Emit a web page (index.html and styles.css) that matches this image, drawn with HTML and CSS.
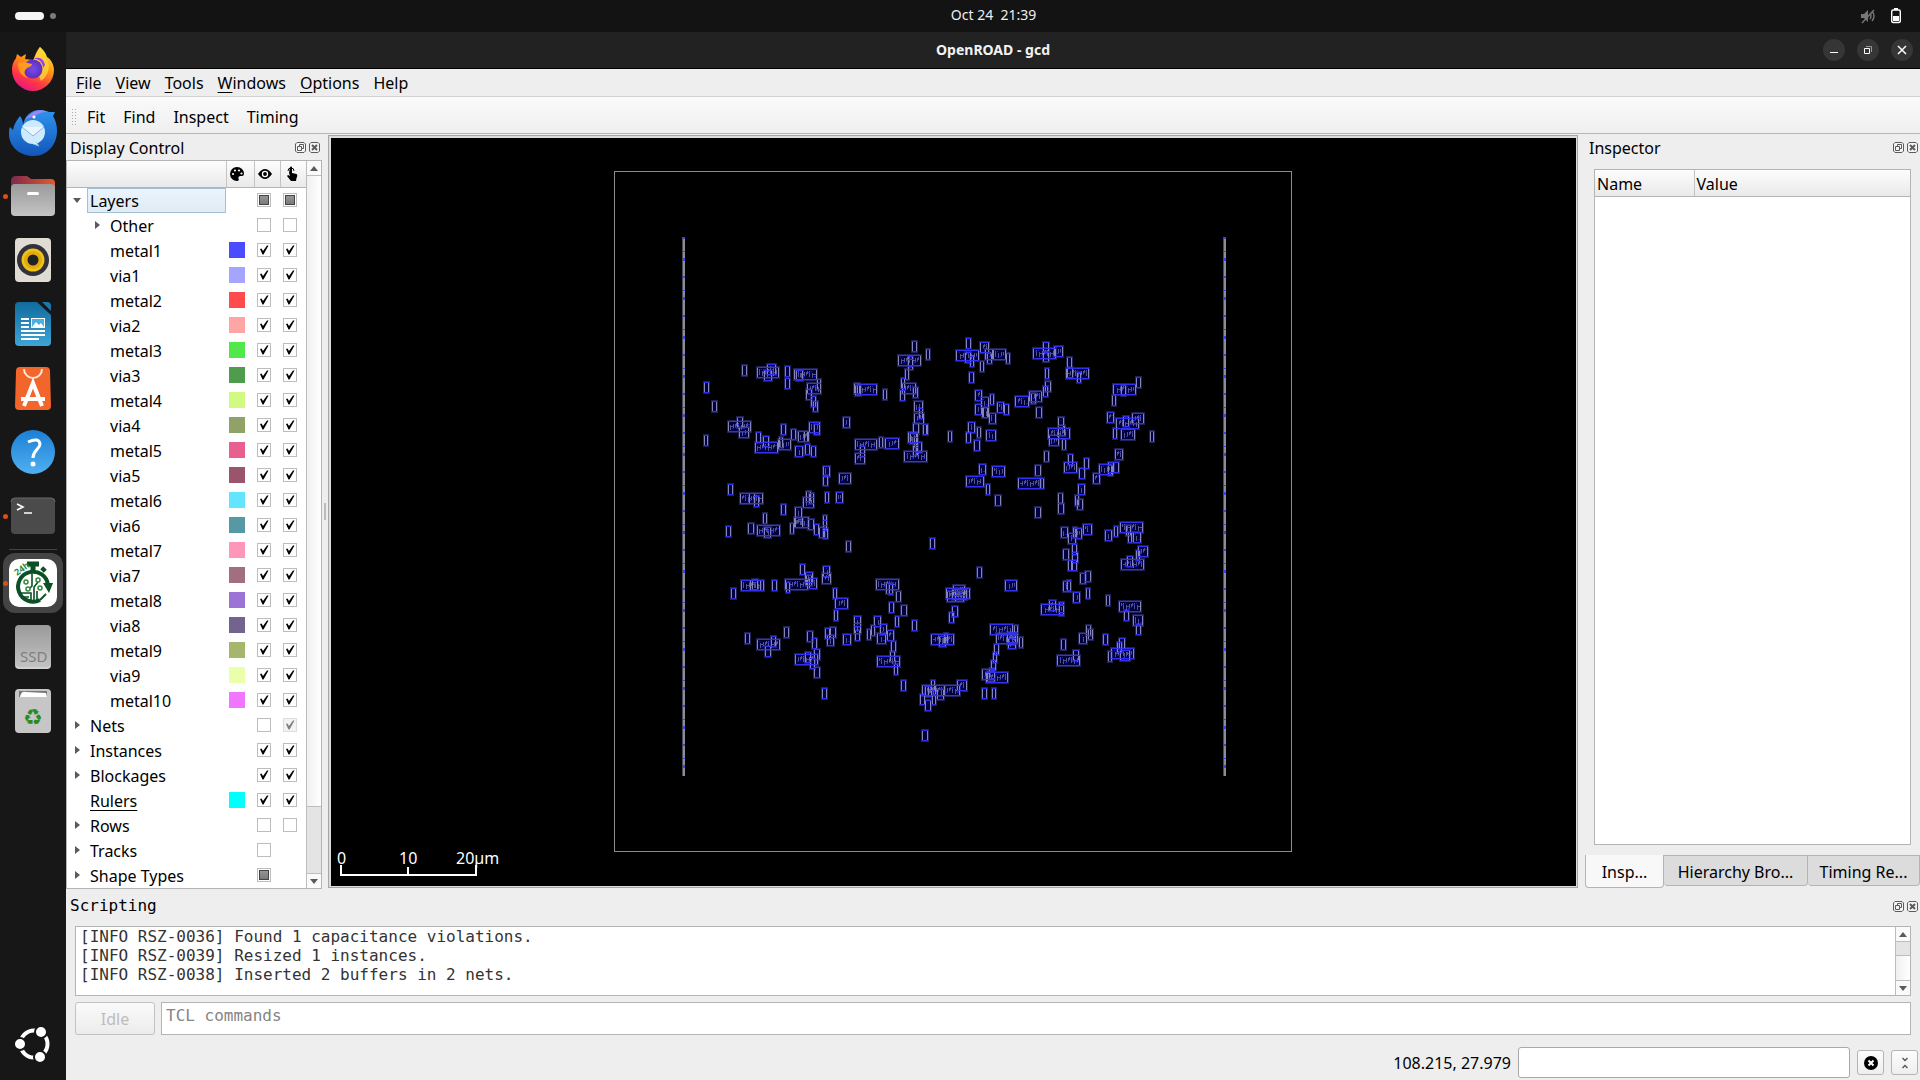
FILE: index.html
```html
<!DOCTYPE html>
<html lang="en">
<head>
<meta charset="utf-8">
<title>OpenROAD - gcd</title>
<link rel="stylesheet" href="styles.css">
</head>
<body>
<svg class="defs" aria-hidden="true">
  <defs>
    <symbol id="float" viewBox="0 0 11 11"><path d="M2 .5h7L10.500 2v7L9 10.500H2L.5 9V2z" fill="#f4f4f4" stroke="#5c5c5c"/><path d="M4.500 4V2.500h4v4H7M2.500 4.500h4v4h-4z" fill="none" stroke="#5c5c5c"/></symbol>
    <symbol id="shut" viewBox="0 0 11 11"><path d="M2 .5h7L10.500 2v7L9 10.500H2L.5 9V2z" fill="#f4f4f4" stroke="#5c5c5c"/><path d="M3 3l5 5M8 3L3 8" stroke="#5c5c5c" stroke-width="2"/></symbol>
    <symbol id="up" viewBox="0 0 8 5"><path d="M0 5l4-5 4 5z" fill="#5a5a5a"/></symbol>
    <symbol id="down" viewBox="0 0 8 5"><path d="M0 0l4 5 4-5z" fill="#5a5a5a"/></symbol>
    <linearGradient id="fox" x1=".8" y1="0" x2=".3" y2="1"><stop offset="0" stop-color="#fff44f"/><stop offset=".4" stop-color="#ff980e"/><stop offset=".75" stop-color="#ff3647"/><stop offset="1" stop-color="#e31587"/></linearGradient>
    <radialGradient id="globe"><stop offset="0" stop-color="#7a4be8"/><stop offset="1" stop-color="#5b2fc0"/></radialGradient>
    <linearGradient id="bird" x1="0" y1="0" x2="0" y2="1"><stop offset="0" stop-color="#2f93ee"/><stop offset="1" stop-color="#1256b8"/></linearGradient>
    <linearGradient id="metal" x1="0" y1="0" x2="0" y2="1"><stop offset="0" stop-color="#9a9a9a"/><stop offset="1" stop-color="#c4c4c4"/></linearGradient>
    <linearGradient id="folder"><stop offset="0" stop-color="#7a2a50"/><stop offset="1" stop-color="#e8592b"/></linearGradient>
    <linearGradient id="doc" x1="0" y1="0" x2="0" y2="1"><stop offset="0" stop-color="#106a9e"/><stop offset="1" stop-color="#3fa5d6"/></linearGradient>
    <linearGradient id="ask" x1="0" y1="0" x2="0" y2="1"><stop offset="0" stop-color="#1d7fd6"/><stop offset="1" stop-color="#4fb0f0"/></linearGradient>
  </defs>
</svg>

<header class="topbar">
  <div class="workspaces"><span class="pill"></span><span class="dot"></span></div>
  <time class="clock">Oct 24&nbsp; 21:39</time>
  <div class="tray">
    <svg width="16" height="16" viewBox="0 0 16 16"><path d="M1 6h3l4-4v12l-4-4H1z" fill="#777"/><path d="M10 5q2 3 0 6M12 3q4 5 0 10M2 15L14 2" fill="none" stroke="#777" stroke-width="1.400"/></svg>
    <svg width="12" height="16" viewBox="0 0 12 16"><path d="M4 0h4v2H4z" fill="#fff"/><rect x="1.700" y="2" width="8.600" height="12.500" rx="1.500" fill="none" stroke="#fff" stroke-width="1.400"/><path d="M3 8h6v5H3z" fill="#fff"/></svg>
  </div>
</header>

<div class="desktop">
  <nav class="dock" aria-label="Dock">
    <button class="app" aria-label="Firefox"><svg viewBox="0 0 48 48"><path d="M31 3c4 3 6 7 7 10 4 2 7 8 7 13a21 21 0 1 1-42 0c0-6 2-9 4-12l1-4 4 3 5-3-1 5 8 1z" fill="url(#fox)"/><path d="M24 18c2-6 3-11 7-15 4 5 4 9 7 13 5 8-1 18-6 21z" fill="#ffd43a" opacity=".8"/><circle cx="24" cy="25" r="9.500" fill="url(#globe)"/><path d="M9 19c5-3 9 0 14 1 0 3-4 3-6 5-3 3-1 7 2 9-6-1-10-7-10-15z" fill="#ff9a1e"/><path d="M24 15c5-1 10 3 10 9l2-3c-1-6-6-9-12-6z" fill="#9a3df0"/></svg></button>
    <button class="app" aria-label="Thunderbird"><svg viewBox="0 0 48 48"><path d="M11 8c3 4 3 7 3 10 1-10 8-16 17-16 4 0 7 1 9 2h6l-2 4c3 5 4 10 4 15 0 14-10 25-23 25C10 48 0 38 0 26c0-3 0-5 1-7l3 3c1-6 4-10 7-14z" fill="url(#bird)"/><path d="M21 7c4-5 12-6 17-3-6 0-10 2-13 5-4 0-7 1-9 3 1-2 3-4 5-5z" fill="#9a86f2"/><circle cx="24" cy="24" r="12" fill="#cfe9ff"/><path d="M13 19l11 9 11-9M24 36l6 2-3-4" fill="#e9f6ff" stroke="#7db8ee"/><circle cx="25" cy="9" r="1.500" fill="#fff"/></svg></button>
    <button class="app running" aria-label="Files"><svg viewBox="0 0 48 48"><path d="M2 9q0-5 5-5h11l4 3h20q4 0 4 4v12H2z" fill="url(#folder)"/><rect x="2" y="12" width="44" height="32" rx="4" fill="url(#metal)"/><rect x="18" y="20" width="12" height="3" rx="1.500" fill="#fff"/></svg></button>
    <button class="app" aria-label="Rhythmbox"><svg viewBox="0 0 48 48"><rect x="6" y="2" width="36" height="44" rx="4" fill="#e0dcd3"/><circle cx="24" cy="24" r="16" fill="#30313b"/><circle cx="24" cy="24" r="11.500" fill="#f2c118"/><circle cx="24" cy="24" r="9" fill="#e0ab0e"/><circle cx="24" cy="24" r="5.500" fill="#222"/></svg></button>
    <button class="app" aria-label="Writer"><svg viewBox="0 0 48 48"><path d="M10 2h18l14 13v27q0 4-4 4H10q-4 0-4-4V6q0-4 4-4z" fill="url(#doc)"/><path d="M33 2h5q4 0 4 4v5z" fill="#1c78aa"/><path d="M12 18h8v2h-8zM12 22h8v2h-8zM12 26h8v2h-8zM12 30h24v2H12zM12 34h24v2H12zM12 38h18v2H12z" fill="#fff"/><rect x="22.500" y="18.500" width="13" height="9" fill="#4ab0e0" stroke="#fff"/><path d="M23 27l4-5 3 3 2-2 3 4z" fill="#fff"/></svg></button>
    <button class="app" aria-label="App Center"><svg viewBox="0 0 48 48"><path d="M11 3h26q4 0 4 4l1 35q0 4-4 4H10q-4 0-4-4L7 7q0-4 4-4z" fill="#f2652b"/><path d="M15 5a9 9 0 0 0 18 0" fill="none" stroke="#fbe6da" stroke-width="2"/><path d="M15 42l9-23 9 23M12 35h24" fill="none" stroke="#fff" stroke-width="4"/></svg></button>
    <button class="app" aria-label="Help"><svg viewBox="0 0 48 48"><circle cx="24" cy="24" r="22" fill="url(#ask)"/><path d="M19 14q11-5 12 2c0 5-7 6-7 14" fill="none" stroke="#fff" stroke-width="3"/><circle cx="24" cy="36" r="2.500" fill="#fff"/></svg></button>
    <button class="app running" aria-label="Terminal"><svg viewBox="0 0 48 48"><rect x="2" y="6" width="44" height="36" rx="4" fill="#4b4b4b"/><path d="M2 10q0-4 4-4h36q4 0 4 4" fill="none" stroke="#6a6a6a"/><path d="M8 12l6 3-6 3M15 21h8" fill="none" stroke="#fff" stroke-width="1.600"/></svg></button>
    <hr class="dock-line">
    <button class="app running active" aria-label="OpenROAD"><svg viewBox="0 0 48 48"><rect width="48" height="48" rx="10" fill="#fff"/><g fill="none" stroke="#0b4f24"><path d="M39 26A15 15 0 1 0 31 41" stroke-width="4"/><path d="M31 41l6-6" stroke-width="2"/><path d="M18 5h12M24 4v9M33 12l3-3" stroke-width="5"/><path d="M23 15v12l-3 3M25 42V28l4-5M28 42V32M12 34h10v8M14 38h6" stroke-width="1.600"/></g><path d="M34 24h10l-4 10z" fill="#0b4f24"/><g fill="#fff" stroke="#2d8a3a" stroke-width="1.500"><circle cx="17" cy="23" r="2"/><circle cx="29" cy="21" r="2"/><circle cx="19" cy="30" r="2"/><circle cx="31" cy="29" r="2"/></g><text x="8" y="17" class="day" transform="rotate(-35 8 17)">24h</text></svg></button>
    <button class="app" aria-label="SSD"><svg viewBox="0 0 48 48"><rect x="6" y="2" width="36" height="44" rx="4" fill="url(#metal)"/><path d="M7 43q1 2 4 2h27q2 0 3-2" fill="none" stroke="#ddd"/><text x="11" y="39" class="ssd">SSD</text></svg></button>
    <button class="app" aria-label="Trash"><svg viewBox="0 0 48 48"><rect x="6" y="2" width="36" height="44" rx="4" fill="#c6c6c6"/><path d="M10 4h28v6H10z" fill="#777"/><path d="M11 10q1-6 6-5l20 1 1 4z" fill="#fff"/><text x="24" y="38" class="recycle">♻</text></svg></button>
    <button class="app start" aria-label="Show Apps"><svg viewBox="0 0 48 48"><circle cx="25" cy="24" r="13.500" fill="none" stroke="#fff" stroke-width="4"/><g fill="#fff" stroke="#171717" stroke-width="2"><circle cx="11" cy="24" r="6"/><circle cx="32" cy="12" r="6"/><circle cx="31" cy="37" r="6"/></g></svg></button>
  </nav>

  <main class="window">
    <div class="titlebar">
      <h1>OpenROAD - gcd</h1>
      <div class="winbtns">
        <button aria-label="Minimize"><svg viewBox="0 0 22 22"><path d="M7 13.500h8" stroke="#fff"/></svg></button>
        <button aria-label="Restore"><svg viewBox="0 0 22 22"><path d="M7.500 9.500h5v5h-5z" fill="none" stroke="#fff"/><path d="M9 7.500h5.500V13" fill="none" stroke="#999"/></svg></button>
        <button aria-label="Close"><svg viewBox="0 0 22 22"><path d="M7 7l8 8M15 7l-8 8" stroke="#fff" stroke-width="1.500"/></svg></button>
      </div>
    </div>
    <div class="menubar">
      <button><u>F</u>ile</button><button><u>V</u>iew</button><button><u>T</u>ools</button><button><u>W</u>indows</button><button><u>O</u>ptions</button><button>Help</button>
    </div>
    <div class="toolbar">
      <span class="grip"></span><button>Fit</button><button>Find</button><button>Inspect</button><button>Timing</button>
    </div>

    <div class="work">
      <section class="control">
        <div class="panel-title"><h2>Display Control</h2><button aria-label="Float"><svg><use href="#float"/></svg></button><button aria-label="Close"><svg><use href="#shut"/></svg></button></div>
        <div class="tree">
          <table>
            <thead><tr>
              <th class="c-name"></th>
              <th class="c-color"><svg width="14" height="14" viewBox="0 0 14 14"><path d="M7 0a7 7 0 1 0 0 14c2 0 2-1 1.500-2.500C8 10 9 9 10.500 9H12q2 0 2-2.500C14 3 11 0 7 0z"/><g fill="#f4f4f4"><circle cx="3" cy="7" r="1.100"/><circle cx="5" cy="3.500" r="1.100"/><circle cx="9" cy="3.500" r="1.100"/><circle cx="11.500" cy="6.500" r="1.100"/></g></svg></th>
              <th class="c-eye"><svg width="14" height="10" viewBox="0 0 14 10"><path d="M0 5q7-10 14 0Q7 15 0 5z"/><circle cx="7" cy="5" r="3.200" fill="#fff"/><circle cx="7" cy="5" r="1.900"/></svg></th>
              <th class="c-hand"><svg width="14" height="15" viewBox="-2 0 14 15"><path d="M3 7l1-6q1.500-1 2 0v6l4.500 1q1.500 1 0 4L10 15H5L1 10l1-1 2 1z"/><path d="M2 5a3 3 0 1 1 6 0" fill="none" stroke="#000"/></svg></th>
            </tr></thead>
            <tbody id="tree-rows"></tbody>
          </table>
          <div class="scroll" aria-hidden="true"><span class="step"><svg><use href="#up"/></svg></span><span class="track"></span><span class="thumb"></span><span class="step"><svg><use href="#down"/></svg></span></div>
        </div>
      </section>
      <div class="split"><span></span></div>

      <section class="layout" aria-label="Layout">
        <svg id="chip" viewBox="331 138 1245 748">
          <rect x="614.500" y="171.500" width="677" height="680" fill="none" stroke="#8c8c8c"/>
          <g id="rails"></g>
          <g id="cells"></g>
          <path d="M341 865v10h135v-10M408 867v8" fill="none" stroke="#fff" stroke-width="2"/>
          <g class="scale"><text x="337" y="864">0</text><text x="399" y="864">10</text><text x="456" y="864">20µm</text></g>
        </svg>
      </section>

      <section class="inspector">
        <div class="panel-title"><h2>Inspector</h2><button aria-label="Float"><svg><use href="#float"/></svg></button><button aria-label="Close"><svg><use href="#shut"/></svg></button></div>
        <div class="props"><table><thead><tr><th class="p-name">Name</th><th>Value</th></tr></thead></table></div>
        <div class="tabs" role="tablist">
          <button role="tab" aria-selected="true" class="tab on">Insp...</button><button role="tab" class="tab mid">Hierarchy Bro...</button><button role="tab" class="tab last">Timing Re...</button>
        </div>
      </section>
    </div>

    <section class="scripting">
      <div class="panel-title"><h2>Scripting</h2><button aria-label="Float"><svg><use href="#float"/></svg></button><button aria-label="Close"><svg><use href="#shut"/></svg></button></div>
      <div class="log">
        <pre>[INFO RSZ-0036] Found 1 capacitance violations.
[INFO RSZ-0039] Resized 1 instances.
[INFO RSZ-0038] Inserted 2 buffers in 2 nets.</pre>
        <div class="scroll" aria-hidden="true"><span class="step"><svg><use href="#up"/></svg></span><span class="thumb"></span><span class="track"></span><span class="step"><svg><use href="#down"/></svg></span></div>
      </div>
      <div class="command">
        <button class="idle" disabled>Idle</button>
        <textarea rows="1" placeholder="TCL commands" aria-label="TCL commands"></textarea>
      </div>
    </section>

    <footer class="status">
      <output>108.215, 27.979</output>
      <input type="text" aria-label="Find">
      <button aria-label="Clear"><svg width="14" height="14" viewBox="0 0 14 14"><circle cx="7" cy="7" r="7"/><path d="M4.500 4.500l5 5M9.500 4.500l-5 5" stroke="#fff" stroke-width="2"/></svg></button>
      <button aria-label="Collapse"><svg width="6" height="12" viewBox="0 0 6 12"><path d="M.5 1L3 3.500 5.500 1M.5 11L3 8.500 5.500 11" fill="none" stroke="#555" stroke-width="1.400"/></svg></button>
    </footer>
  </main>
</div>
<script src="app.js"></script>
</body>
</html>
```

FILE: styles.css
```css
* { box-sizing: border-box; }
body {
  margin: 0;
  min-height: 100vh;
  display: flex;
  flex-direction: column;
  background: #171717;
  color: #000;
  font: 16px/20px "Noto Sans", sans-serif;
}
button, input, textarea { font: inherit; color: inherit; padding: 0; margin: 0; }
button { border: 0; background: none; }
h1, h2, pre { margin: 0; }
.defs { position: absolute; width: 0; height: 0; }

.topbar {
  height: 32px;
  padding: 0 18px 0 15px;
  display: grid;
  grid-template-columns: 1fr auto 1fr;
  align-items: center;
  background: #131313;
  color: #eee;
}
.workspaces { display: flex; align-items: center; gap: 6px; }
.pill { width: 29px; height: 8px; border-radius: 4px; background: #f5f5f5; }
.dot { width: 6px; height: 6px; border-radius: 50%; background: #7c7c7c; }
.clock { font-size: 14px; padding: 0 0 2px 70px; }
.tray { display: flex; justify-content: flex-end; align-items: center; gap: 14px; }

.desktop { flex: 1; display: flex; }
.dock {
  width: 66px;
  flex: none;
  display: flex;
  flex-direction: column;
  align-items: center;
  gap: 16px;
  padding: 12px 0;
}
.app { position: relative; width: 48px; height: 48px; }
.app svg { position: relative; display: block; width: 48px; height: 48px; }
.running::before {
  content: "";
  position: absolute;
  left: -6px;
  top: 22px;
  width: 5px;
  height: 5px;
  border-radius: 50%;
  background: #d9501c;
  z-index: 1;
}
.active::after {
  content: "";
  position: absolute;
  inset: -6px;
  border-radius: 12px;
  background: #444;
}
.active svg { z-index: 1; }
.dock-line { width: 48px; height: 3px; margin: -8px 0; border: 0; background: linear-gradient(#171717 1px, #444 1px, #444 2px, #171717 2px); }
.start { margin-top: auto; }
.day { font: bold 9px "Noto Sans", sans-serif; fill: #2d8a3a; }
.ssd { font: 15px "Noto Sans", sans-serif; fill: #808080; }
.recycle { font: 22px "DejaVu Sans", sans-serif; fill: #2c8a25; text-anchor: middle; }

.window { flex: 1; min-width: 0; display: flex; flex-direction: column; background: #eee; }
.titlebar {
  height: 37px;
  display: grid;
  grid-template-columns: 1fr auto 1fr;
  align-items: center;
  padding: 0 7px;
  background: #222;
  border-bottom: 1px solid #000;
  color: #f2f2f2;
}
.titlebar h1 { grid-column: 2; font-size: 14px; font-weight: 700; }
.winbtns { display: flex; justify-content: flex-end; gap: 12px; }
.winbtns button { width: 22px; height: 22px; border-radius: 50%; background: #363636; }
.winbtns svg { display: block; width: 22px; height: 22px; }

.menubar { height: 28px; display: flex; align-items: center; gap: 14px; padding-left: 10px; border-bottom: 1px solid #d2d2d2; }
.menubar u { text-underline-offset: 3px; }
.toolbar {
  height: 37px;
  display: flex;
  align-items: center;
  gap: 18px;
  padding: 3px 0 0 5px;
  border-bottom: 1px solid #b6b6b6;
  background: linear-gradient(#fafafa, #efefef);
}
.grip { width: 5px; height: 17px; margin-right: -7px; background: radial-gradient(#aaa 1px, transparent 1px) 0 0 / 3px 3px; }

.work { flex: 1; min-height: 0; display: flex; }
.panel-title { display: flex; align-items: center; gap: 3px; height: 26px; padding: 1px 2px 0 4px; }
.panel-title h2 { flex: 1; font-size: 16px; font-weight: 400; }
.panel-title button, .panel-title svg { display: block; width: 11px; height: 11px; }

.control { width: 256px; flex: none; display: flex; flex-direction: column; }
.tree { flex: 1; display: flex; border: 1px solid #b4b4b4; background: #fff; }
.tree table { flex: 1; border-collapse: collapse; table-layout: fixed; align-self: flex-start; }
.tree th { height: 26px; padding: 0; border-right: 1px solid #c4c4c4; border-bottom: 1px solid #b4b4b4; background: linear-gradient(#fdfdfd, #e9e9e9); vertical-align: middle; }
.tree th:last-child { border-right: 0; }
.tree th svg { display: block; margin-left: 3px; }
.c-name { width: 160px; }
.c-color { width: 28px; }
.c-eye, .c-hand { width: 26px; }
.tree td { height: 25px; padding: 0; text-align: center; vertical-align: middle; }
.name { display: flex; align-items: center; height: 25px; text-align: left; }
.name label { flex: 1; height: 25px; padding: 2px 0 0 2px; border: 1px solid transparent; }
.arrow { width: 20px; display: flex; justify-content: center; align-items: center; }
.child { padding-left: 20px; }
.arrow::before { content: ""; }
.shut::before { border: 4px solid transparent; border-left: 5px solid #5a5a5a; border-right: 0; }
.open::before { border: 4px solid transparent; border-top: 5px solid #5a5a5a; border-bottom: 0; }
.selected label { border-color: #a5c0d4; background: linear-gradient(#e9f4fc, #e0ebf4); }
.link label { text-decoration: underline; text-underline-offset: 3px; }
.swatch { display: block; width: 16px; height: 16px; margin-left: 3px; }
.tree input {
  appearance: none;
  display: block;
  width: 14px;
  height: 14px;
  margin-left: 3px;
  border: 1px solid #bdbdbd;
  background: #fff center / 12px 12px no-repeat;
}
.tree input:checked { background-image: url("data:image/svg+xml,%3Csvg xmlns='http://www.w3.org/2000/svg' viewBox='0 0 12 12'%3E%3Cpath d='M2 5l1.500-.5 1.500 2.500L9 1.500h1.500L5.500 10.500H4.500z'/%3E%3C/svg%3E"); }
.tree input:disabled { background-color: #e8e8e8; opacity: .5; }
.tree input.partial { background: linear-gradient(#999, #777) content-box; padding: 1px; box-shadow: inset 0 0 0 1px #fff, inset 0 0 0 2px #444; }

.scroll { width: 15px; flex: none; display: flex; flex-direction: column; border-left: 1px solid #bdbdbd; background: linear-gradient(90deg, #f0f0f0, #fff); }
.step { height: 14px; display: flex; align-items: center; justify-content: center; background: #fafafa; }
.step svg { width: 8px; height: 5px; }
.track { flex: 1; border: solid #bdbdbd; border-width: 1px 0 0; }
.thumb { height: 68px; background: #e4e4e4; border: solid #bdbdbd; border-width: 1px 0; }

.split { width: 6px; flex: none; display: flex; align-items: center; justify-content: center; }
.split span { width: 2px; height: 17px; background: radial-gradient(#bbb 1px, transparent 1px) 0 0 / 2px 3px; }
.layout { flex: 1; min-width: 0; display: flex; margin: 1px 0; padding: 2px 1px 1px 2px; background: #dcdcdc; border: 1px solid #a6a6a6; }
#chip { display: block; width: 100%; height: 100%; min-height: 0; background: #000; shape-rendering: crispEdges; }
.scale { font: 16px "Noto Sans", sans-serif; fill: #fff; }

.inspector { width: 342px; flex: none; display: flex; flex-direction: column; padding-left: 7px; }
.props { flex: 1; margin: 9px 9px 10px; border: 1px solid #b4b4b4; background: #fff; }
.props table { width: 100%; border-collapse: collapse; table-layout: fixed; }
.props th { height: 26px; padding: 2px 0 0 2px; text-align: left; font-weight: 400; border-bottom: 1px solid #b4b4b4; background: linear-gradient(#fdfdfd, #e9e9e9); }
.props .p-name { width: 99px; border-right: 1px solid #c4c4c4; }
.tabs { display: flex; align-items: flex-start; height: 34px; }
.tab { flex: none; height: 31px; padding-top: 2px; border: 1px solid #b4b4b4; border-left: 0; border-radius: 0 0 4px 4px; background: #dcdcdc; white-space: nowrap; }
.tab.on { width: 79px; height: 33px; border-left: 1px solid #b4b4b4; border-top: 0; background: #f8f8f8; }
.tab.mid { width: 144px; }
.tab.last { flex: 1; }

.scripting { padding-top: 1px; }
.scripting .panel-title { height: 32px; padding-top: 0; }
.scripting h2, .log, .command textarea { font-family: "DejaVu Sans Mono", monospace; }
.log { display: flex; height: 70px; margin: 4px 9px 0; border: 1px solid #b4b4b4; background: #fff; }
.log pre { flex: 1; padding-left: 4px; font: inherit; line-height: 19px; color: #333; }
.log .thumb { height: 15px; }
.log .track { border-top: 0; border-bottom: 1px solid #bdbdbd; }
.command { display: flex; gap: 6px; margin: 6px 9px 0; }
.idle { width: 80px; height: 33px; border: 1px solid #c2c2c2; border-radius: 3px; background: linear-gradient(#fafafa, #ececec); color: #bdbdbd; }
.command textarea { flex: 1; height: 33px; padding: 3px 4px; border: 1px solid #b4b4b4; background: #fff; resize: none; overflow: hidden; }
.command textarea::placeholder { color: #858585; }

.status { height: 45px; display: flex; align-items: center; justify-content: flex-end; gap: 7px; padding: 12px 2px 2px 0; }
.status input { width: 332px; height: 31px; border: 1px solid #a9a9a9; border-radius: 3px; background: #fff; }
.status button { width: 27px; height: 25px; display: flex; align-items: center; justify-content: center; border: 1px solid #b4b4b4; border-radius: 3px; background: linear-gradient(#fdfdfd, #eee); }
```

FILE: app.js
```js
// Display control rows: name, depth, arrow, colour, visible, selectable.
// States: 1 on, 0 off, "p" partly on, "d" on but disabled, null no box.
const rows = [
  ["Layers", 0, "open", null, "p", "p"],
  ["Other", 1, "shut", null, 0, 0],
  ["metal1", 1, "", "#4b4bff", 1, 1], ["via1", 1, "", "#a5a5ff", 1, 1],
  ["metal2", 1, "", "#ff4b4b", 1, 1], ["via2", 1, "", "#ffa5a5", 1, 1],
  ["metal3", 1, "", "#50e84b", 1, 1], ["via3", 1, "", "#4f9c4f", 1, 1],
  ["metal4", 1, "", "#d2fa82", 1, 1], ["via4", 1, "", "#90a268", 1, 1],
  ["metal5", 1, "", "#e8608f", 1, 1], ["via5", 1, "", "#9a556c", 1, 1],
  ["metal6", 1, "", "#63e5ff", 1, 1], ["via6", 1, "", "#5698a4", 1, 1],
  ["metal7", 1, "", "#ff96b9", 1, 1], ["via7", 1, "", "#a36f80", 1, 1],
  ["metal8", 1, "", "#9c74d6", 1, 1], ["via8", 1, "", "#74628f", 1, 1],
  ["metal9", 1, "", "#a6b66c", 1, 1], ["via9", 1, "", "#e9ffaa", 1, 1],
  ["metal10", 1, "", "#f075ff", 1, 1],
  ["Nets", 0, "shut", null, 0, "d"],
  ["Instances", 0, "shut", null, 1, 1],
  ["Blockages", 0, "shut", null, 1, 1],
  ["Rulers", 0, "", "#00ffff", 1, 1],
  ["Rows", 0, "shut", null, 0, 0],
  ["Tracks", 0, "shut", null, 0, null],
  ["Shape Types", 0, "shut", null, "p", null],
];
const box = (name, kind, s) => s === null ? "" :
  `<input type="checkbox" id="${kind}-${name.replace(" ", "-")}" aria-label="${name} ${kind}"` +
  `${s === 1 || s === "d" ? " checked" : ""}${s === "d" ? " disabled" : ""}${s === "p" ? ' class="partial"' : ""}>`;
document.getElementById("tree-rows").innerHTML = rows.map(([n, d, a, c, v, s]) =>
  `<tr><td><div class="name${d ? " child" : ""}${n === "Layers" ? " selected" : ""}${n === "Rulers" ? " link" : ""}">` +
  `<span class="arrow ${a}"></span><label for="visible-${n.replace(" ", "-")}">${n}</label></div></td>` +
  `<td>${c ? `<span class="swatch" style="background:${c}"></span>` : ""}</td>` +
  `<td>${box(n, "visible", v)}</td><td>${box(n, "selectable", s)}</td></tr>`).join("");

// Placed cells, by region: origin, then x,y,width in thirds of a unit.
const regions = [
  [680, 320, "186,134,16 73,186,16 97,244,15 73,344,13 232,140,67 262,131,28 252,150,23 315,138,14 315,174,14 342,148,69 348,150,20 381,190,41 411,178,11 379,208,17 394,228,15 400,244,15 144,304,69 172,292,18 176,322,30 303,312,14 334,328,15 354,334,32 373,334,13 386,305,34 403,312,18 229,337,15 250,348,19 226,366,69 298,352,12 295,358,39 346,377,25 375,373,14 393,379,14 523,188,19 526,195,19 530,192,60 609,207,10 655,106,69 684,108,15 697,62,14 738,88,13 684,116,15 676,148,12 664,173,10 667,190,42 700,200,16 660,210,14 703,244,27 717,265,9 703,280,30 700,310,18 730,312,13 685,335,30 690,338,20 701,352,12 707,367,17 700,374,14 673,394,69 490,292,21 526,358,67 524,398,30 539,378,14 597,350,11 614,354,42 430,437,22 430,466,14 478,460,37 145,491,15 179,520,69 223,528,16 206,520,17 378,514,14 370,532,33 386,520,16 436,515,13 469,516,22 303,553,14 346,560,22"],
  [680, 500, "249,40,11 204,68,17 138,78,16 231,76,68 251,80,20 330,70,10 342,50,44 346,52,24 384,58,17 403,72,15 418,80,19 430,46,12 430,60,12 430,85,16 499,124,15 750,114,14 184,240,69 210,240,34 216,238,18 276,240,14 153,265,14 361,193,15 316,236,68 318,246,13 376,217,25 378,224,18 388,234,23 428,197,22 427,220,26 459,265,11 465,294,38 463,330,12 588,238,70 618,250,22 628,253,13 648,273,15 628,306,14 664,316,18 645,349,11 697,361,15 523,348,22 523,370,22 526,390,14 583,348,22 574,376,10 562,388,13 599,372,22 592,398,26 622,390,22 632,424,14 630,452,14 490,403,25 436,384,14 449,381,18 442,404,20 313,381,14 196,399,15 232,418,70 274,409,14 256,438,17 382,393,17 395,413,15 345,463,68 376,455,17 402,448,17 391,474,15 403,500,17 591,468,69 642,492,11 664,540,14 427,565,16"],
  [920, 320, "138,54,14 19,88,13 108,90,69 136,96,17 149,108,12 181,67,28 194,88,24 202,98,16 220,88,40 258,99,11 181,122,10 148,156,16 340,84,69 370,67,18 370,92,18 401,79,27 440,112,15 438,144,69 441,142,17 472,156,13 376,145,13 376,183,18 368,198,15 328,214,40 334,218,16 285,228,43 348,260,17 166,211,22 184,232,24 166,252,22 187,260,20 190,262,14 211,222,13 232,247,22 251,253,15 208,278,22 145,306,22 138,337,14 172,320,10 199,331,31 163,360,19 85,332,10 9,312,14 415,291,18 385,324,67 415,314,22 387,345,30 427,357,13 372,392,14 445,402,16 433,427,40 491,415,14 478,443,19 346,436,18 295,474,70 361,474,13 178,433,21 216,438,38 138,468,54 199,492,10 224,526,18 346,562,18 475,492,22 415,520,16 415,550,18 466,526,9 472,537,19 647,172,14 580,192,68 603,196,14 577,225,13 561,276,22 589,295,68 610,288,17 637,280,37 603,328,41 580,324,13 690,333,11 586,388,25 538,432,40 564,427,17 564,436,14 580,427,18 518,460,21"],
  [920, 500, "424,80,22 445,99,24 466,85,22 488,73,27 460,82,10 457,133,16 430,148,19 455,157,17 443,180,12 457,180,14 554,90,21 583,78,12 600,67,68 618,76,15 625,96,12 640,96,25 655,138,30 647,151,12 603,177,69 621,167,19 171,201,14 256,240,37 78,264,72 100,256,37 105,273,26 82,272,50 96,268,44 481,219,17 496,213,19 430,243,25 441,240,12 460,276,20 499,263,13 559,286,13 364,312,70 388,300,22 418,306,15 418,314,15 96,319,18 88,337,15 598,304,67 613,330,16 640,346,29 649,373,15 478,399,25 498,375,14 505,388,16 550,403,15 422,417,14 33,402,68 56,408,21 73,400,11 211,373,69 282,376,13 229,400,66 262,396,32 262,402,28 265,414,25 297,411,11 223,432,15 220,457,13 214,481,14 187,508,40 199,516,67 208,505,19 202,512,24 185,564,15 216,564,11 411,465,69 460,451,18 573,444,68 597,414,17 592,427,14 600,450,30 565,453,13 6,556,68 33,540,10 72,556,48 111,541,29 51,568,20 1,583,15 16,600,18 37,583,13 6,690,19 23,556,24 14,558,20"],
];
const d = { fill: "", side: "", edge: "", wire: "", spot: "" };
for (const [ox, oy, list] of regions) {
  for (const item of list.split(" ")) {
    const [a, b, c] = item.split(",").map(Number);
    const x = ox + Math.round(a / 3), y = oy + Math.round(b / 3);
    const w = Math.max(4, Math.round(c / 3)), h = 11;
    d.fill += `M${x} ${y}h${w}v${h}h-${w}z`;
    d.side += `M${x} ${y + 1}h1v${h - 2}h-1zM${x + w - 1} ${y + 1}h1v${h - 2}h-1z`;
    d.edge += `M${x} ${y}h${w}v1h-${w}zM${x} ${y + h - 1}h${w}v1h-${w}z`;
    // Pin and wire shapes inside the wider cells.
    for (let i = 2; i < w - 2 && w > 6; i++) {
      const k = (i * 7 + a * 3 + b) % 11;
      if (k < 5) d.wire += `M${x + i} ${y + 2 + k % 3}h1v${3 + k % 4}h-1z`;
      if (k > 3 && k < 8) d.spot += `M${x + i} ${y + 2 + k % 6}h${1 + k % 2}v1h-${1 + k % 2}z`;
      if (k === 9 && w > 15) d.wire += `M${x + i} ${y + 5}h3v1h-3z`;
    }
  }
}
document.getElementById("cells").innerHTML =
  `<path d="${d.fill}" fill="#00004c" fill-opacity=".8" stroke="#4848c8" stroke-opacity=".45" stroke-width="2" shape-rendering="auto"/>` +
  `<path d="${d.wire}" fill="#8888b8" fill-opacity=".6"/>` +
  `<path d="${d.spot}" fill="#1c1cf0" fill-opacity=".8"/>` +
  `<path d="${d.side}" fill="#8484b8"/>` +
  `<path d="${d.edge}" fill="#3030ee"/>`;

// Power rails at both sides of the core.
document.getElementById("rails").innerHTML = [682, 1223].map(x =>
  `<path d="M${x}.5 237v539" stroke="#4c4c58"/><path d="M${x + 2} 237v539" stroke="#8c8c94" stroke-width="2"/>` +
  `<path d="M${x + 1}.5 237v539" stroke="#4040f0" stroke-width="2" stroke-dasharray="2 12 1 6 3 15"/>`).join("");
```
